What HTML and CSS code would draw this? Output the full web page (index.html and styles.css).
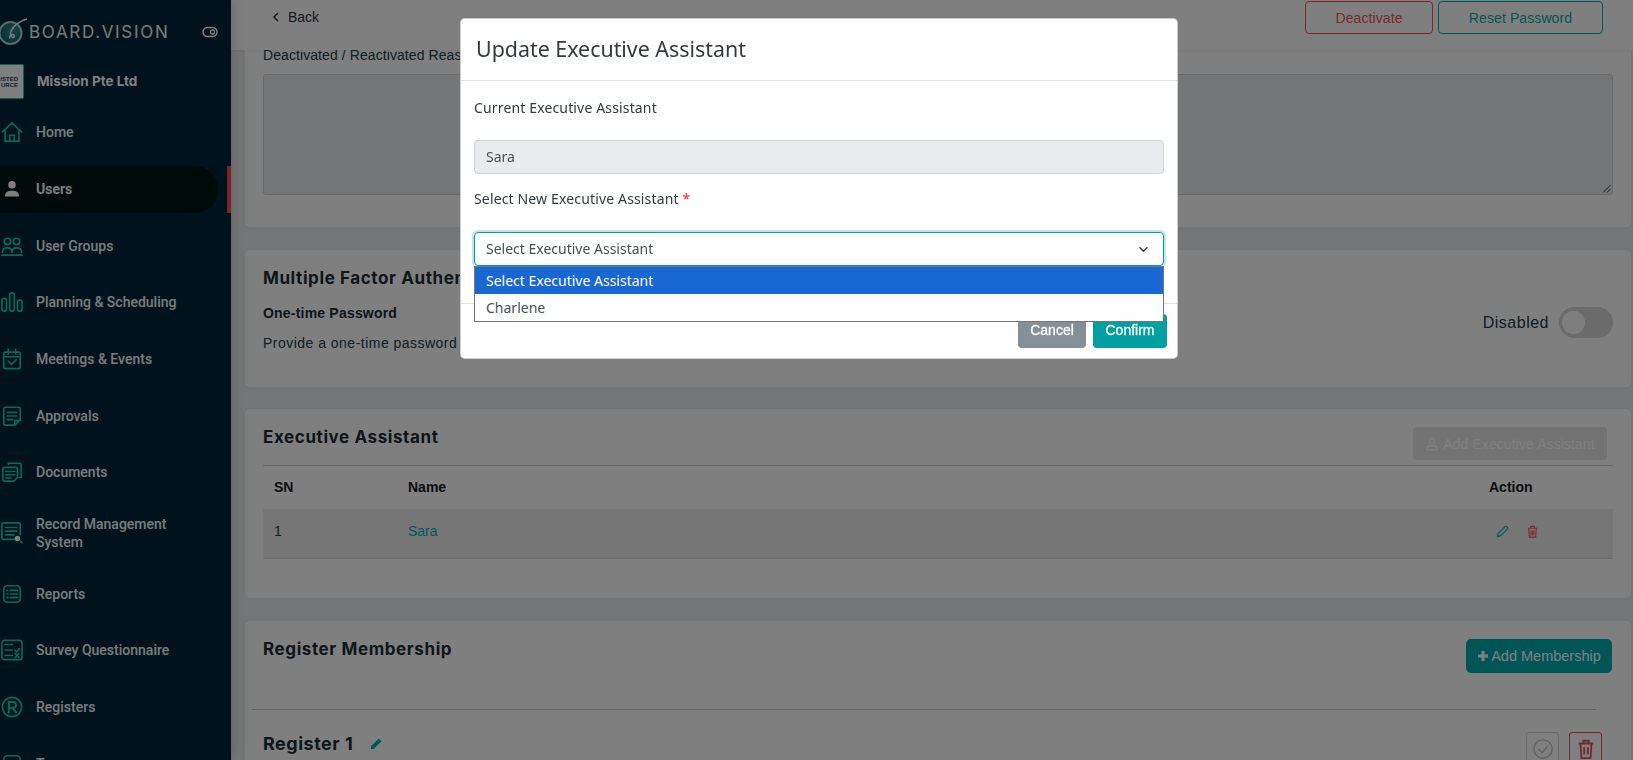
FILE: index.html
```html
<!DOCTYPE html>
<html lang="en">
<head>
<meta charset="utf-8">
<title>Update Executive Assistant</title>
<link rel="stylesheet" href="styles.css">
</head>
<body>
<div class="app">
  <aside class="sidebar">
    <div class="brand">
      <svg class="brand-logo" viewBox="0 0 30 30" width="30" height="30"><defs><radialGradient id="g" cx=".6" cy=".4" r=".7"><stop offset="0" stop-color="#2a8f99"/><stop offset="1" stop-color="#0d5560"/></radialGradient></defs><circle cx="11.500" cy="17" r="11" fill="url(#g)" stroke="#a8d4d6" stroke-width="2"/><path d="M28 3C21 5 15 9 12 15c-1.500 3 .5 7 2.500 6.500 1.500-.5 1-3-1-3-2.500 0-3.500 2-2.500 4" fill="none" stroke="#f2f6f6" stroke-width="1.500"/></svg>
      <span class="brand-name">BOARD.VISION</span>
      <svg class="brand-toggle" viewBox="0 0 16 12" width="16" height="12"><rect x="1" y="1.500" width="14" height="9" rx="4.500" fill="none" stroke="#fff" stroke-width="1.500"/><circle cx="10.500" cy="6" r="2" fill="none" stroke="#fff" stroke-width="1.300"/></svg>
    </div>
    <div class="company">
      <div class="company-logo"><span>USTED</span><span>URCE</span></div>
      <span class="company-name">Mission Pte Ltd</span>
    </div>
    <nav class="nav">
      <a class="nav-item"><svg class="nav-icon" viewBox="0 0 24 24"><path d="M1.500 12 12 2l10.500 10M4.500 10v12h15V10M9.500 22v-6.500h5V22"/></svg><span>Home</span></a>
      <a class="nav-item active"><svg class="nav-icon user" viewBox="0 0 24 24"><circle cx="12" cy="7" r="4.500"/><path d="M3.500 21c0-5 3.500-7 8.500-7s8.500 2 8.500 7z"/></svg><span>Users</span></a>
      <a class="nav-item"><svg class="nav-icon" viewBox="0 0 24 24"><circle cx="7" cy="7" r="3.500"/><circle cx="17" cy="7" r="3.500"/><path d="M1.500 19c0-3.500 2-5 5.500-5s5 1.500 5 5M12 19c0-3.500 1.500-5 5-5s5.500 1.500 5.500 5M1 22h22"/></svg><span>User Groups</span></a>
      <a class="nav-item"><svg class="nav-icon" viewBox="0 0 24 24"><rect x="1" y="8" width="5" height="14" rx="2.500"/><rect x="9.500" y="2" width="5" height="20" rx="2.500"/><rect x="18" y="10" width="5" height="12" rx="2.500"/></svg><span>Planning &amp; Scheduling</span></a>
      <a class="nav-item"><svg class="nav-icon" viewBox="0 0 24 24"><rect x="3" y="4.500" width="18" height="18" rx="2"/><path d="M3 9.500h18M8 1.500v5M16 1.500v5M8 14.500l3.500 3.500 5-5"/></svg><span>Meetings &amp; Events</span></a>
      <a class="nav-item"><svg class="nav-icon" viewBox="0 0 24 24"><path d="M5 2.500h14a2 2 0 0 1 2 2V16l-6 6H5a2 2 0 0 1-2-2V4.500a2 2 0 0 1 2-2zM7 8h10M7 12h10M7 16h6M15 22v-5h6"/></svg><span>Approvals</span></a>
      <a class="nav-item"><svg class="nav-icon" viewBox="0 0 24 24"><path d="M8 3.500V2.500h12a2 2 0 0 1 2 2V18h-2M4 7h12a2 2 0 0 1 2 2v9l-4 4H4a2 2 0 0 1-2-2V9a2 2 0 0 1 2-2zM5 11.500h10M5 15h10M5 18.500h6"/></svg><span>Documents</span></a>
      <a class="nav-item two-line"><svg class="nav-icon" viewBox="0 0 24 24"><path d="M18 19H3a2 2 0 0 1-2-2V3a2 2 0 0 1 2-2h16a2 2 0 0 1 2 2v11M5 6h12M5 10h12M5 14h9"/><circle class="dot" cx="18" cy="18" r="3"/><path d="m21 21 2 1.500"/></svg><span>Record Management System</span></a>
      <a class="nav-item"><svg class="nav-icon" viewBox="0 0 24 24"><rect x="3" y="3" width="18" height="18" rx="4"/><path d="M6.500 8h1M10 8h8M6.500 12h1M10 12h8M6.500 16h1M10 16h8"/></svg><span>Reports</span></a>
      <a class="nav-item"><svg class="nav-icon" viewBox="0 0 24 24"><rect x="1" y="1.500" width="22" height="21" rx="3"/><path d="M4.500 6h8M4.500 12h8M4.500 18h8M15 12l2 2 3-3.500M15.500 16l4 4M19.500 16l-4 4"/></svg><span>Survey Questionnaire</span></a>
      <a class="nav-item"><svg class="nav-icon" viewBox="0 0 24 24"><circle cx="12" cy="12" r="10.500"/><path d="M8.500 18V6.500h4.500a3.200 3.200 0 0 1 0 6.500H8.500M12.500 13l4 5" stroke-width="2.200"/></svg><span>Registers</span></a>
      <a class="nav-item"><svg class="nav-icon" viewBox="0 0 24 24"><rect x="3" y="3" width="18" height="18" rx="4"/></svg><span>Teams</span></a>
    </nav>
  </aside>

  <main class="main">
    <header class="topbar">
      <a class="back"><svg viewBox="0 0 8 12" width="8" height="12"><path d="M6 2 2 6l4 4" fill="none" stroke="currentColor" stroke-width="1.500"/></svg><span>Back</span></a>
      <div class="top-actions">
        <button class="btn-outline red">Deactivate</button>
        <button class="btn-outline teal">Reset Password</button>
      </div>
    </header>

    <div class="content">
      <section class="card card-reason">
        <label class="reason-label">Deactivated / Reactivated Reason</label>
        <div class="textarea"><svg class="grip" viewBox="0 0 9 9" width="9" height="9"><path d="M1 8.500 8.500 1M5 8.500 8.500 5" stroke="#333" stroke-width="1"/></svg></div>
      </section>

      <section class="card card-mfa">
        <div class="mfa-text">
          <h3 class="card-title">Multiple Factor Authentication</h3>
          <p class="otp-title">One-time Password</p>
          <p class="otp-desc">Provide a one-time password via email</p>
        </div>
        <div class="mfa-state">
          <span class="state-label">Disabled</span>
          <span class="switch"><i></i></span>
        </div>
      </section>

      <section class="card card-ea">
        <div class="ea-head">
          <h3 class="card-title">Executive Assistant</h3>
          <button class="btn-disabled"><svg viewBox="0 0 14 14" width="14" height="14"><circle cx="7" cy="4" r="2.700" fill="none" stroke="currentColor" stroke-width="1.300"/><path d="M1.500 13c0-3 2-4.500 5.500-4.500s5.500 1.500 5.500 4.500z" fill="none" stroke="currentColor" stroke-width="1.300"/></svg>Add Executive Assistant</button>
        </div>
        <div class="table">
          <div class="tr th"><span class="c-sn">SN</span><span class="c-name">Name</span><span class="c-action">Action</span></div>
          <div class="tr td"><span class="c-sn">1</span><a class="c-name link">Sara</a>
            <span class="c-action icons">
              <svg viewBox="0 0 14 14" width="13" height="13"><path d="M1.500 12.500 2.500 9 9.800 1.700a1.200 1.200 0 0 1 1.700 0l.8.800a1.200 1.200 0 0 1 0 1.700L5 11.500z" fill="none" stroke="#1ab3b3" stroke-width="1.300"/></svg>
              <svg viewBox="0 0 14 14" width="13" height="13"><path d="M2 3.500h10M5 3.500V1.500h4v2M3 3.500l.6 9.500h6.800l.6-9.500M5.500 6v5M7 6v5M8.500 6v5" fill="none" stroke="#f0546a" stroke-width="1.200"/></svg>
            </span>
          </div>
        </div>
      </section>

      <section class="card card-reg">
        <div class="reg-head">
          <h3 class="card-title">Register Membership</h3>
          <button class="btn-add"><svg viewBox="0 0 12 12" width="12" height="12"><path d="M6 1v10M1 6h10" stroke="currentColor" stroke-width="3"/></svg>Add Membership</button>
        </div>
        <hr class="reg-rule">
        <div class="reg-row">
          <h3 class="reg-title">Register 1</h3>
          <svg class="reg-pencil" viewBox="0 0 14 14" width="13" height="13"><path d="M1 13V10L9.500 1.500l3 3L4 13z" fill="#00b5a8"/></svg>
          <div class="reg-actions">
            <span class="sq grey"><svg viewBox="0 0 24 24" width="22" height="22"><circle cx="12" cy="12" r="10" fill="none" stroke="#c4c4c4" stroke-width="1.500"/><path d="m7 12 4 4 6-7" fill="none" stroke="#c4c4c4" stroke-width="1.500"/></svg></span>
            <span class="sq red"><svg viewBox="0 0 24 24" width="22" height="22"><path d="M4 6h16M9 6V3h6v3M6 6l1 16h10l1-16M10 10v8M14 10v8" fill="none" stroke="#e0505c" stroke-width="2"/></svg></span>
          </div>
        </div>
      </section>
    </div>
  </main>
</div>

<div class="backdrop"></div>

<div class="modal">
  <div class="modal-header"><h2 class="modal-title">Update Executive Assistant</h2></div>
  <div class="modal-body">
    <label class="field-label">Current Executive Assistant</label>
    <div class="input readonly">Sara</div>
    <label class="field-label second">Select New Executive Assistant <b class="req">*</b></label>
    <div class="select-wrap">
      <div class="input select"><span>Select Executive Assistant</span><svg viewBox="0 0 12 8" width="11" height="7"><path d="m1.500 1.500 4.500 4.500 4.500-4.500" fill="none" stroke="#343a40" stroke-width="1.500"/></svg></div>
      <ul class="options">
        <li class="selected">Select Executive Assistant</li>
        <li>Charlene</li>
      </ul>
    </div>
  </div>
  <div class="modal-footer">
    <button class="btn cancel">Cancel</button>
    <button class="btn confirm">Confirm</button>
  </div>
</div>
</body>
</html>
```
FILE: styles.css
```css
* { box-sizing: border-box; }
html, body { margin: 0; height: 100%; overflow: hidden; }
body { font-family: "Liberation Sans", Arial, sans-serif; font-size: 14px; color: #212529; background: #ebedf1; }
button { font-family: inherit; }
h2, h3, p, ul { margin: 0; padding: 0; }

.app { display: flex; width: 1633px; height: 760px; overflow: hidden; }

/* sidebar */
.sidebar { width: 231px; flex: none; height: 760px; background: #002638; color: #fff; position: relative; z-index: 1; box-shadow: 0 0 14px rgba(0,0,0,.22); }
.brand { display: flex; align-items: center; height: 64px; }
.brand-logo { margin-left: -1px; margin-top: -2px; flex: none; }
.brand-name { font-family: Inter, sans-serif; font-size: 17px; letter-spacing: 1.68px; font-weight: 400; color: #f0f4f4; width: 173px; white-space: nowrap; }
.brand-toggle { flex: none; }
.company { display: flex; align-items: center; height: 35px; }
.company-logo { width: 24px; height: 35px; background: #fff; border: 1px solid #14c4b0; border-left: 0; border-radius: 0 2px 2px 0; display: flex; flex-direction: column; justify-content: center; align-items: flex-end; padding-right: 5px; color: #2a3a50; font-size: 6px; line-height: 6px; font-weight: 700; overflow: hidden; white-space: nowrap; }
.company-name { font-family: Inter, sans-serif; font-size: 13.500px; font-weight: 700; margin-left: 13px; margin-top: -2px; color: #fff; }
.nav { display: flex; flex-direction: column; padding-top: 5px; }
.nav-item { display: flex; align-items: center; height: 56.700px; flex: none; font-family: Roboto, sans-serif; font-size: 14px; font-weight: 500; color: #f4f6f8; padding-left: 1px; line-height: 18px; }
.nav-item span { margin-left: 13px; width: 150px; }
.nav-item.active { width: 218px; height: 47px; margin: 4.850px 0; background: #001417; border-radius: 0 24px 24px 0; font-weight: 700; position: relative; }
.nav-item.active::after { content: ""; position: absolute; left: 227px; top: 0; width: 4px; height: 47px; background: #f04a50; }
.nav-item.two-line { height: 64.500px; }
.nav-item.two-line span { width: 140px; }
.nav-icon { width: 22px; height: 22px; flex: none; fill: none; stroke: #0fd0b8; stroke-width: 1.800; stroke-linejoin: round; stroke-linecap: round; }
.nav-icon.user { fill: #fff; stroke: none; width: 20px; height: 20px; margin: 0 1px; }
.nav-icon .dot { fill: #fff; stroke: none; }

/* main */
.main { flex: 1; min-width: 0; height: 760px; background: #ebedf1; overflow: hidden; }
.topbar { height: 50px; background: #fff; display: flex; justify-content: space-between; padding-left: 41px; padding-right: 30px; box-shadow: 0 1px 3px rgba(0,0,0,.06); position: relative; }
.back { display: flex; align-items: center; gap: 8px; height: 34px; color: #1f3540; font-size: 14px; }
.top-actions { display: flex; gap: 5px; padding-top: 1px; }
.btn-outline { height: 33px; background: transparent; border: 1px solid; border-radius: 4px; font-size: 14px; letter-spacing: .1px; }
.btn-outline.red { width: 128px; color: #f0525c; border-color: #f0525c; }
.btn-outline.teal { width: 165px; color: #00adb0; border-color: #00adb0; }

.content { display: flex; flex-direction: column; gap: 22px; padding-left: 14px; padding-right: 2px; }
.card { background: #fff; border-radius: 5px; padding: 0 18px; flex: none; box-shadow: 0 0 6px rgba(0,0,0,.03); }
.card-reason { height: 177px; margin-bottom: 1px; border-radius: 0 0 5px 5px; }
.reason-label { display: block; height: 24px; line-height: 11px; color: #243a48; letter-spacing: .08px; white-space: nowrap; }
.textarea { height: 121px; background: #ebedf1; border: 1px solid #d0d2d4; border-radius: 3px; position: relative; }
.grip { position: absolute; right: 1px; bottom: 1px; }

.card-mfa { height: 137px; display: flex; justify-content: space-between; }
.card-title { font-family: Inter, sans-serif; font-size: 17px; letter-spacing: .6px; font-weight: 700; color: #1c2c36; line-height: 20px; white-space: nowrap; }
.mfa-text { padding-top: 18px; }
.otp-title { font-weight: 700; margin-top: 17px; color: #1c2c36; line-height: 16px; letter-spacing: .2px; }
.otp-desc { margin-top: 14px; line-height: 16px; color: #243a48; letter-spacing: .48px; }
.mfa-state { display: flex; align-items: center; gap: 10px; padding-top: 8px; height: 137px; }
.state-label { font-size: 16px; letter-spacing: .5px; color: #19384a; }
.switch { width: 54px; height: 31px; border-radius: 16px; background: #d6d6d6; padding: 4px 3px; display: block; }
.switch i { display: block; width: 23px; height: 23px; border-radius: 50%; background: #fff; }

.card-ea { height: 189px; margin-bottom: 1px; }
.ea-head { display: flex; justify-content: space-between; height: 57px; border-bottom: 1px solid #cfd1d3; padding-top: 18px; padding-right: 6px; }
.btn-disabled { height: 33px; width: 194px; background: #e6e6e6; border: 0; border-radius: 4px; color: #fff; font-size: 14px; letter-spacing: .1px; display: flex; align-items: center; justify-content: center; gap: 4px; white-space: nowrap; padding-bottom: 1px; }
.table { display: flex; flex-direction: column; }
.tr { display: flex; align-items: center; padding-left: 11px; }
.th { height: 43px; padding-bottom: 2px; font-weight: 700; color: #14181c; }
.td { height: 50px; background: #ededed; border-bottom: 1px solid #d8d8d8; color: #1f3540; padding-bottom: 5px; }
.c-sn { width: 134px; }
.c-name { width: 1081px; }
.link { color: #00b5b5; }
.c-action { width: 100px; }
.icons { display: flex; gap: 17px; padding-left: 7px; }

.card-reg { height: 200px; }
.reg-head { display: flex; justify-content: space-between; height: 88px; padding-top: 18px; padding-right: 1px; }
.btn-add { height: 34px; width: 146px; background: #00abae; border: 0; border-radius: 5px; color: #fff; font-size: 14.500px; display: flex; align-items: center; justify-content: center; gap: 2px; white-space: nowrap; padding-bottom: 2px; }
.reg-rule { margin: 0 17px 0 -11px; border: 0; border-top: 1px solid #c8c8c8; }
.reg-row { display: flex; align-items: flex-start; padding-top: 22px; }
.reg-title { font-family: Inter, sans-serif; font-size: 18px; letter-spacing: .5px; font-weight: 700; color: #1c2c36; line-height: 24px; }
.reg-pencil { margin-left: 17px; margin-top: 5px; }
.reg-actions { margin-left: auto; display: flex; gap: 10px; padding-right: 11px; }
.sq { width: 33px; height: 33px; border: 1px solid; border-radius: 3px; display: flex; align-items: center; justify-content: center; }
.sq.grey { border-color: #d0d0d0; }
.sq.red { border-color: #e0505c; }

/* modal */
.backdrop { position: fixed; inset: 0; background: #000; opacity: .5; z-index: 2; }
.modal { position: fixed; z-index: 3; left: 460px; top: 18px; width: 718px; height: 341px; background: #fff; border-radius: 5px; border: 1px solid rgba(0,0,0,.2); display: flex; flex-direction: column; font-family: "Noto Sans", sans-serif; }
.modal-header { height: 62px; border-bottom: 1px solid #dee2e6; padding: 0 15px 2px; display: flex; align-items: center; }
.modal-title { font-size: 21.400px; font-weight: 400; color: #343a40; line-height: 30px; }
.modal-body { height: 222px; padding: 0 13px; }
.field-label { display: block; color: #343a40; font-size: 14px; letter-spacing: .15px; line-height: 20px; padding-top: 17px; height: 59px; }
.field-label.second { padding-top: 15px; height: 58px; }
.req { color: #f5222d; font-weight: 400; }
.input { height: 34px; width: 690px; border: 1px solid #ced4da; border-radius: 4px; padding: 0 11px; line-height: 32px; color: #495057; font-size: 14px; }
.readonly { background: #e9ecef; }
.select-wrap { position: relative; }
.select { border-color: #00a0a0; box-shadow: 0 0 0 2px rgba(0,160,160,.25); display: flex; align-items: center; justify-content: space-between; padding-right: 14px; line-height: 20px; }
.options { position: absolute; left: 0; top: 34px; width: 690px; list-style: none; background: #fff; border: 1px solid #767676; z-index: 2; color: #495057; }
.options li { height: 27px; line-height: 27px; padding-left: 11px; }
.options .selected { background: #1967d2; color: #fff; }
.modal-footer { border-top: 1px solid #dee2e6; flex: 1; display: flex; justify-content: flex-end; align-items: flex-end; gap: 7px; padding: 0 10px 10px 0; }
.btn { height: 34px; padding: 0 0 3px; border: 0; border-radius: 4px; color: #fff; font-family: "Liberation Sans", Arial, sans-serif; font-size: 14px; -webkit-text-stroke: .3px #fff; }
.cancel { width: 68px; background: #868e96; }
.confirm { width: 74px; background: #00a0a0; }
```
